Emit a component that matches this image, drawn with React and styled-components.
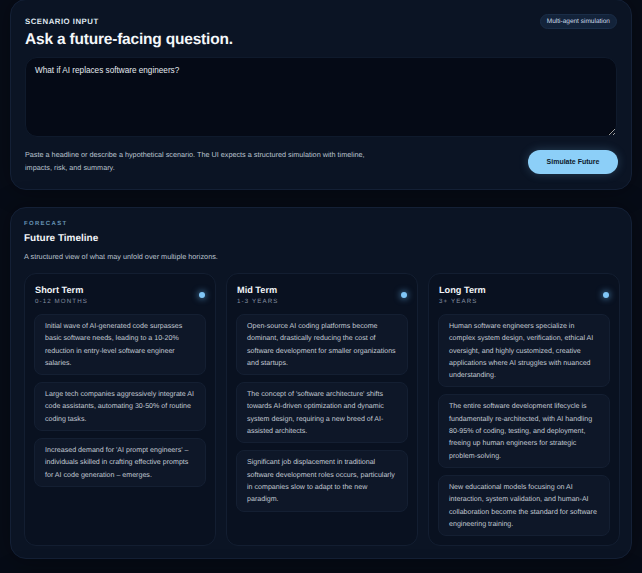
import React from 'react';
import styled, { createGlobalStyle } from 'styled-components';

const GlobalStyle = createGlobalStyle`
    * { box-sizing: border-box; }
    html, body {
        margin: 0;
        padding: 0;
        background: #070c17;
        font-family: "Liberation Sans", Arial, sans-serif;
        color: #e8edf3;
        text-rendering: geometricPrecision;
        -webkit-font-smoothing: antialiased;
    }
`;

const Page = styled.main`
    display: flex;
    flex-direction: column;
    gap: 17px;
    padding: 0 10px;
    margin-top: -1px;
`;

const Panel = styled.section`
    background: #0b1424;
    border: 1px solid #142036;
    border-radius: 16px;
    padding: ${p => p.$pad};
    box-shadow: 0 0 24px rgba(0, 0, 0, .35);
`;

const TopRow = styled.div`
    display: flex;
    justify-content: space-between;
    align-items: center;
`;

const Eyebrow = styled.div`
    font-size: 7.8px;
    line-height: 10px;
    font-weight: 700;
    letter-spacing: 0.5px;
    color: #dfe6ee;
`;

const Badge = styled.span`
    display: inline-block;
    background: #13233a;
    border: 1px solid #1a2d47;
    color: #cfdcea;
    font-size: 6.5px;
    line-height: 7px;
    padding: 3px 6px;
    border-radius: 999px;
`;

const Heading = styled.h1`
    font-size: 15.5px;
    line-height: 18px;
    font-weight: 700;
    margin: 2px 0 8px;
    color: #f4f7fa;
    letter-spacing: -0.2px;
`;

const Question = styled.textarea`
    display: block;
    width: 100%;
    height: 80px;
    margin: 0;
    background: #050a16;
    border: 1px solid #0f1a2c;
    border-radius: 12px;
    color: #e4e9ef;
    font-family: inherit;
    font-size: 8.2px;
    padding: 8px 9px;
    resize: vertical;
    outline: none;
`;

const Footer = styled.div`
    display: flex;
    justify-content: space-between;
    align-items: center;
    margin-top: 12px;
`;

const Helper = styled.p`
    margin: 0;
    max-width: 360px;
    font-size: 7.25px;
    line-height: 12.5px;
    color: #b9c2ce;
`;

const SimulateButton = styled.button`
    width: 90px;
    height: 24px;
    border: none;
    border-radius: 999px;
    background: #8ccff8;
    color: #0c1a2b;
    font-family: inherit;
    font-size: 7px;
    font-weight: 700;
    margin-right: -1px;
    box-shadow: 0 0 10px rgba(120, 190, 240, .25);
    cursor: pointer;
`;

const Kicker = styled.div`
    font-size: 6px;
    line-height: 8px;
    font-weight: 700;
    letter-spacing: 1.3px;
    color: #6592b3;
`;

const SectionTitle = styled.h2`
    font-size: 10px;
    line-height: 12px;
    font-weight: 700;
    margin: 5px 0 7px;
    color: #f2f5f8;
`;

const SectionText = styled.p`
    font-size: 7.3px;
    line-height: 9px;
    margin: 0 0 12px;
    color: #b9c2ce;
`;

const Columns = styled.div`
    display: grid;
    grid-template-columns: repeat(3, 1fr);
    gap: 10px;
`;

const Column = styled.div`
    background: #091120;
    border: 1px solid #131e31;
    border-radius: 12px;
    padding: 11px 9px 10px;
    height: 273px;
`;

const ColumnHead = styled.div`
    display: flex;
    justify-content: space-between;
    align-items: flex-start;
    padding-left: 1px;
    margin-bottom: 8px;
`;

const ColumnTitle = styled.div`
    font-size: 9.2px;
    line-height: 11px;
    font-weight: 700;
    color: #f2f5f8;
`;

const Horizon = styled.div`
    font-size: 6.2px;
    line-height: 8px;
    letter-spacing: 1.1px;
    color: #8590a0;
    margin-top: 2px;
`;

const Dot = styled.span`
    width: 6px;
    height: 6px;
    border-radius: 50%;
    background: #80c6f6;
    box-shadow: 0 0 6px 1px rgba(110, 190, 250, .55);
    margin: 7px 1px 0 0;
`;

const Items = styled.div`
    display: flex;
    flex-direction: column;
    gap: 7px;
`;

const Item = styled.div`
    background: #0e1728;
    border: 1px solid #141f32;
    border-radius: 8px;
    padding: 5px 9px 5px 10px;
    font-size: 7.1px;
    line-height: 12.3px;
    color: #c2c9d3;
`;

const timeline = [
    {
        title: 'Short Term',
        horizon: '0-12 MONTHS',
        items: [
            'Initial wave of AI-generated code surpasses basic software needs, leading to a 10-20% reduction in entry-level software engineer salaries.',
            'Large tech companies aggressively integrate AI code assistants, automating 30-50% of routine coding tasks.',
            "Increased demand for 'AI prompt engineers' – individuals skilled in crafting effective prompts for AI code generation – emerges."
        ]
    },
    {
        title: 'Mid Term',
        horizon: '1-3 YEARS',
        items: [
            'Open-source AI coding platforms become dominant, drastically reducing the cost of software development for smaller organizations and startups.',
            "The concept of 'software architecture' shifts towards AI-driven optimization and dynamic system design, requiring a new breed of AI-assisted architects.",
            'Significant job displacement in traditional software development roles occurs, particularly in companies slow to adapt to the new paradigm.'
        ]
    },
    {
        title: 'Long Term',
        horizon: '3+ YEARS',
        items: [
            'Human software engineers specialize in complex system design, verification, ethical AI oversight, and highly customized, creative applications where AI struggles with nuanced understanding.',
            'The entire software development lifecycle is fundamentally re-architected, with AI handling 80-95% of coding, testing, and deployment, freeing up human engineers for strategic problem-solving.',
            'New educational models focusing on AI interaction, system validation, and human-AI collaboration become the standard for software engineering training.'
        ]
    }
];

export default function App() {
    return (
        <>
            <GlobalStyle />
            <Page>
                <Panel $pad="14px 14px 15px 14px">
                    <TopRow>
                        <Eyebrow>SCENARIO INPUT</Eyebrow>
                        <Badge>Multi-agent simulation</Badge>
                    </TopRow>
                    <Heading>Ask a future-facing question.</Heading>
                    <Question defaultValue="What if AI replaces software engineers?" />
                    <Footer>
                        <Helper>
                            Paste a headline or describe a hypothetical scenario. The UI expects a structured simulation with timeline, impacts, risk, and summary.
                        </Helper>
                        <SimulateButton>Simulate Future</SimulateButton>
                    </Footer>
                </Panel>
                <Panel $pad="12px 11px 12px 13px">
                    <Kicker>FORECAST</Kicker>
                    <SectionTitle>Future Timeline</SectionTitle>
                    <SectionText>A structured view of what may unfold over multiple horizons.</SectionText>
                    <Columns>
                        {timeline.map(col => (
                            <Column key={col.title}>
                                <ColumnHead>
                                    <div>
                                        <ColumnTitle>{col.title}</ColumnTitle>
                                        <Horizon>{col.horizon}</Horizon>
                                    </div>
                                    <Dot />
                                </ColumnHead>
                                <Items>
                                    {col.items.map((text, i) => <Item key={i}>{text}</Item>)}
                                </Items>
                            </Column>
                        ))}
                    </Columns>
                </Panel>
                <Panel $pad="20px" />
            </Page>
        </>
    );
}
